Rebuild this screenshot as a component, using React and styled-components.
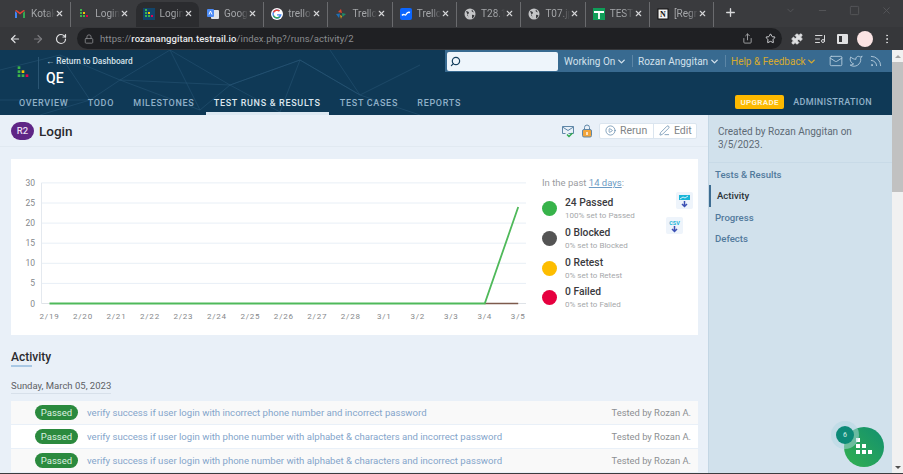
import React from "react";
import styled, { createGlobalStyle } from "styled-components";
import {
  ArrowLeft, ArrowRight, RotateCw, Lock, Share, Star, Puzzle, ListMusic, MoreVertical, Search,
  ChevronDown, Mail, Twitter, Rss, Plus, X, Minus, Square, CirclePlay, PenLine,
} from "lucide-react";

const GlobalStyle = createGlobalStyle`
  html, body { margin: 0; padding: 0; height: 100%; overflow: hidden; }
  body { font-family: Roboto, "Liberation Sans", sans-serif; background: #e9f0f8; }
  * { box-sizing: border-box; }
`;

const Screen = styled.div`
  width: 903px;
  height: 474px;
  display: flex;
  flex-direction: column;
  overflow: hidden;
  border-bottom: 1px solid #3b3c3f;
`;

/* browser chrome */
const TabStrip = styled.div`
  height: 27px;
  flex: none;
  background: #3a3b3e;
  display: flex;
  align-items: flex-start;
  padding: 2px 0 0 7px;
`;

const Tab = styled.div`
  width: 64.3px;
  height: 25px;
  flex: none;
  display: flex;
  align-items: center;
  padding: 0 6px 2px 7px;
  background: ${({ $active }) => ($active ? "#2b2c2f" : "transparent")};
  border-radius: ${({ $active }) => ($active ? "8px 8px 0 0" : "0")};
  border-right: 1px solid ${({ $sep }) => ($sep ? "#6a6b6e" : "transparent")};
  background-clip: padding-box;
`;

const TabIcon = styled.span`
  width: 12px;
  height: 12px;
  flex: none;
  display: flex;
  color: #c6c7c9;
`;

const TabTitle = styled.span`
  flex: 1;
  margin-left: 5px;
  font-size: 10px;
  color: #a4a6a9;
  overflow: hidden;
  white-space: nowrap;
  mask-image: linear-gradient(to right, #000 60%, transparent);
`;

const TabClose = styled(X)`
  width: 9px;
  height: 9px;
  flex: none;
  color: #d5d6d8;
  stroke-width: 3;
`;

const NewTab = styled(Plus)`
  width: 13px;
  height: 13px;
  margin: 4px 0 0 10px;
  color: #d8d9db;
  stroke-width: 2.5;
`;

const WindowControls = styled.div`
  margin-left: auto;
  display: flex;
  gap: 21px;
  align-items: center;
  padding: 3px 11px 0 0;
  color: #55565a;
  svg { width: 11px; height: 11px; }
`;

const AddressBar = styled.div`
  height: 23px;
  flex: none;
  background: #36373a;
  display: flex;
  align-items: center;
  padding: 0 10px 0 9px;
  color: #d8d9db;
`;

const NavIcon = styled.span`
  display: flex;
  margin-right: ${({ $gap }) => $gap || 11}px;
  color: ${({ $dim }) => ($dim ? "#7c7d80" : "#e0e1e3")};
  svg { width: 12px; height: 12px; stroke-width: 2.4; }
`;

const UrlPill = styled.div`
  width: 705px;
  height: 21px;
  border-radius: 11px;
  background: #1f2023;
  display: flex;
  align-items: center;
  padding: 0 6px 0 7px;
  font-size: 9.5px;
  letter-spacing: 0.07px;
  color: #8a8c8f;
  svg { width: 10px; height: 10px; flex: none; }
`;

const UrlText = styled.span`
  margin-left: 6px;
  flex: 1;
  b { color: #e8e9eb; font-weight: 500; }
`;

const PillActions = styled.div`
  display: flex;
  gap: 12px;
  color: #a5a6a8;
  svg { width: 11px; height: 11px; }
  svg:last-child { color: #dcdde0; }
`;

const Extensions = styled.div`
  margin-left: auto;
  display: flex;
  align-items: center;
  gap: 11px;
  svg { width: 12px; height: 12px; }
`;

const Avatar = styled.span`
  width: 16px;
  height: 16px;
  margin: 0 -3px 0 -2px;
  border-radius: 50%;
  background: #fbe4e4;
`;

const SidePanelIcon = styled.span`
  width: 11px;
  height: 10px;
  border: 2px solid #e0e1e3;
  border-left-width: 6px;
  background: #36373a;
  border-radius: 1px;
  transform: scaleX(-1);
`;

/* page */
const Window = styled.div`
  flex: 1;
  min-height: 0;
  display: flex;
`;

const Content = styled.div`
  width: 892px;
  flex: none;
  display: flex;
  flex-direction: column;
  position: relative;
`;

const Header = styled.header`
  height: 65px;
  flex: none;
  background: #0f3956;
  display: flex;
  flex-direction: column;
  position: relative;
  overflow: hidden;
`;

const HeaderLines = styled.svg`
  position: absolute;
  left: 0;
  top: 0;
  width: 460px;
  height: 65px;
  pointer-events: none;
`;

const HeaderTop = styled.div`
  height: 43px;
  flex: none;
  display: flex;
  justify-content: space-between;
  align-items: flex-start;
  position: relative;
`;

const Brand = styled.div`
  display: flex;
  align-items: center;
  padding: 7px 0 0 15px;
`;

const BrandText = styled.div`
  margin-left: 7px;
  padding-left: 7px;
  height: 32px;
  border-left: 1px solid #2a5573;
  display: flex;
  flex-direction: column;
`;

const BackLink = styled.div`
  font-size: 8.3px;
  font-weight: 500;
  color: #d5e1ea;
  line-height: 10px;
  margin-top: -1px;
`;

const Project = styled.div`
  font-size: 14px;
  font-weight: 500;
  color: #fff;
  line-height: 16px;
  margin-top: 4px;
`;

const TopBand = styled.div`
  width: 447px;
  height: 22px;
  background: #386a90;
  display: flex;
  align-items: center;
  padding: 0 0 0 2px;
`;

const SearchBox = styled.div`
  width: 111px;
  height: 19px;
  background: #eef5fb;
  border-radius: 2px;
  display: flex;
  align-items: center;
  padding-left: 3px;
  color: #17405e;
  margin-right: 6px;
  svg { width: 11px; height: 11px; stroke-width: 2.6; transform: scaleX(-1); }
`;

const BandMenu = styled.div`
  display: flex;
  align-items: center;
  flex: none;
  width: ${({ $w }) => $w}px;
  height: 12px;
  font-size: 10px;
  white-space: nowrap;
  color: ${({ $help }) => ($help ? "#d7aa2f" : "#d3e1ec")};
  svg { width: 11px; height: 11px; stroke-width: 3; flex: none; margin-left: auto; margin-right: 5px; }
  & + & { border-left: 1px solid #5c86a6; padding-left: 5px; }
`;

const BandIcons = styled.div`
  display: flex;
  gap: 6px;
  margin-left: 10px;
  color: #b9cfdf;
  svg { width: 14px; height: 14px; stroke-width: 1.5; }
`;

const NavRow = styled.nav`
  flex: 1;
  display: flex;
  align-items: stretch;
  padding: 0 20px 0 11px;
  position: relative;
`;

const NavItem = styled.div`
  padding: 1px 8px 0;
  margin-right: 3.3px;
  display: flex;
  align-items: center;
  white-space: nowrap;
  font-size: 9px;
  font-weight: 500;
  letter-spacing: 0.68px;
  color: ${({ $active }) => ($active ? "#dbe6ee" : "#8fb0c8")};
  border-bottom: 3px solid ${({ $active }) => ($active ? "#dce8f2" : "transparent")};
`;

const Upgrade = styled.div`
  align-self: flex-start;
  margin: 2px 9px 0 auto;
  width: 49px;
  height: 14px;
  background: #fdb900;
  border-radius: 2px;
  color: #fff3cf;
  font-size: 8px;
  font-weight: 700;
  letter-spacing: 0.3px;
  display: flex;
  align-items: center;
  justify-content: center;
`;

const Admin = styled.div`
  align-self: flex-start;
  margin-top: 2px;
  line-height: 14px;
  font-size: 9px;
  font-weight: 500;
  letter-spacing: 0.36px;
  color: #8fb0c8;
`;

const Body = styled.div`
  flex: 1;
  min-height: 0;
  display: flex;
`;

const Main = styled.main`
  width: 708px;
  flex: none;
  display: flex;
  flex-direction: column;
  padding: 0 10px 0 11px;
  overflow: hidden;
`;

const TitleRow = styled.div`
  height: 32px;
  flex: none;
  margin: 0 -10px 0 -11px;
  padding: 0 11px 0 11px;
  border-bottom: 1px solid #e1e9f1;
  display: flex;
  align-items: center;
`;

const RunBadge = styled.span`
  width: 23px;
  height: 18px;
  border-radius: 9px;
  background: #5f2586;
  color: #e9dcf0;
  font-size: 9.5px;
  font-weight: 500;
  display: flex;
  align-items: center;
  justify-content: center;
`;

const Title = styled.h1`
  margin: 0 0 0 5px;
  font-size: 13.5px;
  font-weight: 500;
  color: #2a2a2e;
  flex: 1;
`;

const TitleIcon = styled.svg`
  width: 14px;
  height: 14px;
  margin-right: 5px;
  flex: none;
`;

const ButtonGroup = styled.div`
  display: flex;
  height: 16px;
  background: #fff;
  border: 1px solid #dbe5ef;
  border-radius: 2px;
`;

const ActionButton = styled.div`
  display: flex;
  align-items: center;
  gap: 4px;
  padding: 0 4px 0 5px;
  width: ${({ $w }) => $w}px;
  font-size: 10.5px;
  color: #808487;
  & + & { border-left: 1px solid #dbe5ef; }
  svg { width: 11px; height: 11px; color: #5f87a8; stroke-width: 1.6; flex: none; }
`;

const Card = styled.section`
  height: 176px;
  flex: none;
  margin-top: 12px;
  background: #fff;
  display: flex;
  position: relative;
`;

const ChartSvg = styled.svg`
  width: 517px;
  height: 176px;
  flex: none;
`;

const Legend = styled.div`
  padding: 18px 0 0 14px;
  flex: 1;
`;

const LegendHead = styled.div`
  font-size: 9.5px;
  color: #9a9c9f;
  line-height: 11px;
  margin-bottom: 6px;
  a { color: #6d9bc4; text-decoration: underline; }
`;

const LegendRow = styled.div`
  height: 29.7px;
  display: flex;
  align-items: center;
  gap: 8px;
`;

const Dot = styled.span`
  width: 15px;
  height: 15px;
  border-radius: 50%;
  background: ${({ $c }) => $c};
  flex: none;
`;

const LegendLabel = styled.div`
  font-size: 10.3px;
  font-weight: 500;
  color: #3a3a3e;
  line-height: 13px;
`;

const LegendSub = styled.div`
  font-size: 8px;
  color: #a5a7aa;
  line-height: 11px;
  margin-top: 1px;
`;

const ExportIcon = styled.div`
  position: absolute;
  left: ${({ $x }) => $x}px;
  top: ${({ $y }) => $y}px;
  width: 17px;
  height: 17px;
  border-radius: 2px;
  background: #eef4fb;
  display: flex;
`;

const SectionTitle = styled.h2`
  margin: 15px 0 0;
  font-size: 12px;
  font-weight: 500;
  color: #2a2a2e;
  line-height: 14px;
  padding-bottom: 3px;
  position: relative;
  &::after {
    content: "";
    position: absolute;
    left: 0;
    bottom: 0;
    width: 21px;
    height: 2px;
    background: #a9c8e4;
  }
`;

const DateLine = styled.div`
  margin-top: 13px;
  align-self: flex-start;
  font-size: 9.5px;
  color: #5d6165;
  line-height: 12px;
  border-bottom: 1px solid #d7e0ea;
  padding-bottom: 1px;
`;

const ResultList = styled.div`
  margin-top: 7px;
  display: flex;
  flex-direction: column;
  gap: 1px;
`;

const ResultRow = styled.div`
  height: 23px;
  flex: none;
  display: flex;
  align-items: center;
  padding: 0 7px 0 24px;
  background: ${({ $odd }) => ($odd ? "#f9f9f9" : "#fff")};
`;

const StatusPill = styled.span`
  width: 43px;
  height: 15px;
  border-radius: 8px;
  background: #2b8a3e;
  color: #dff0e2;
  font-size: 9.5px;
  display: flex;
  align-items: center;
  justify-content: center;
  flex: none;
`;

const TestLink = styled.span`
  margin-left: 9px;
  flex: 1;
  font-size: 9.58px;
  color: #84a5cb;
  white-space: nowrap;
`;

const TestedBy = styled.span`
  font-size: 9.4px;
  color: #8c8f92;
`;

const Sidebar = styled.aside`
  width: 184px;
  flex: none;
  background: #d1e1ec;
  border-left: 1px solid #c3d6e4;
  display: flex;
  flex-direction: column;
`;

const SideInfo = styled.div`
  height: 48px;
  flex: none;
  padding: 10px 20px 0 9px;
  border-bottom: 1px solid #c8dae7;
  font-size: 10px;
  line-height: 13px;
  color: #5d6a75;
`;

const SideLinks = styled.div`
  padding-top: 1px;
  display: flex;
  flex-direction: column;
`;

const SideLink = styled.div`
  height: 21.3px;
  display: flex;
  align-items: center;
  padding-left: ${({ $active }) => ($active ? 6 : 4)}px;
  font-size: 9.6px;
  font-weight: 500;
  color: ${({ $active }) => ($active ? "#2c3338" : "#517a9c")};
  border-left: 2px solid ${({ $active }) => ($active ? "#3e6d92" : "transparent")};
`;

const Fab = styled.div`
  position: absolute;
  left: 844px;
  top: 377px;
  width: 40px;
  height: 40px;
  border-radius: 50%;
  background: linear-gradient(225deg, #12906f, #34b04f);
  display: flex;
  align-items: center;
  justify-content: center;
`;

const FabBadge = styled.div`
  position: absolute;
  left: 836px;
  top: 376px;
  width: 18px;
  height: 18px;
  z-index: 1;
  border-radius: 50%;
  background: #0d8a78;
  box-shadow: 0 0 0 5px rgba(180, 215, 225, 0.5);
  color: #bfe4dc;
  font-size: 7px;
  font-weight: 500;
  display: flex;
  align-items: center;
  justify-content: center;
`;

const ScrollTrack = styled.div`
  width: 11px;
  flex: none;
  background: #f1f1f1;
  display: flex;
  flex-direction: column;
`;

const ScrollArrow = styled.div`
  height: 12px;
  flex: none;
  display: flex;
  align-items: center;
  justify-content: center;
  &::after {
    content: "";
    border-left: 3px solid transparent;
    border-right: 3px solid transparent;
    ${({ $down }) => ($down ? "border-top: 3px solid #505050;" : "border-bottom: 3px solid #a3a3a3;")}
  }
`;

const ScrollThumb = styled.div`
  height: 130px;
  flex: none;
  background: #c1c1c1;
  margin-bottom: auto;
`;

const GmailIcon = () => (
  <svg viewBox="0 0 12 12" width="12" height="12">
    <path d="M1 3v7h2V5z" fill="#4285f4" />
    <path d="M9 5v5h2V3z" fill="#34a853" />
    <path d="M1 2.5 6 6.5l5-4L9.5 2 6 4.6 2.5 2z" fill="#ea4335" />
  </svg>
);

const RailIcon = ({ bg, size = 12 }) => (
  <svg viewBox="0 0 12 12" width={size} height={size}>
    {bg && <rect width="12" height="12" fill="#12456b" />}
    <rect x="2" y="1" width="2" height="2" fill="#3db54a" />
    <rect x="2" y="4" width="2" height="2" fill="#3db54a" />
    <rect x="5" y="4" width="2" height="2" fill="#f6c500" />
    <rect x="2" y="7" width="2" height="2" fill="#3db54a" />
    <rect x="5" y="7" width="2" height="2" fill="#3db54a" />
    <rect x="8" y="7" width="2" height="2" fill="#e6004c" />
  </svg>
);

const TranslateIcon = () => (
  <svg viewBox="0 0 12 12" width="12" height="12">
    <rect x="4" y="2" width="8" height="9" rx="1" fill="#dfe3e8" />
    <rect x="0" y="1" width="7" height="8" rx="1" fill="#4c8bf5" />
    <path d="M2 6.5 3.5 3 5 6.5" stroke="#fff" fill="none" />
  </svg>
);

const GoogleIcon = () => (
  <svg viewBox="0 0 12 12" width="12" height="12">
    <circle cx="6" cy="6" r="6" fill="#fff" />
    <path d="M10 6.2H6.1v1.3h2.3C8 8.6 7.1 9.2 6 9.2a3.2 3.2 0 0 1 0-6.4c.8 0 1.5.3 2 .8l1-1A4.6 4.6 0 1 0 10.6 6z" fill="#4285f4" />
    <path d="M1.9 3.9 3.1 4.8A3.2 3.2 0 0 1 8 3.6l1-1A4.6 4.6 0 0 0 1.9 3.900z" fill="#ea4335" />
    <path d="M1.9 8.1 3.1 7.2A3.2 3.2 0 0 0 8 8.4l1 1A4.6 4.6 0 0 1 1.9 8.100z" fill="#34a853" />
  </svg>
);

const TrelloStar = () => (
  <svg viewBox="0 0 12 12" width="12" height="12">
    <path d="M6 1 7 5 3 4z" fill="#d8452e" />
    <path d="M1 6 5 5.5 4 10z" fill="#1f6fb5" />
    <path d="M7 5 11 6 7.5 9z" fill="#1d8c6a" />
    <path d="M5 7 7 8 6 11z" fill="#e0a21b" />
  </svg>
);

const WaveIcon = () => (
  <svg viewBox="0 0 12 12" width="12" height="12">
    <rect width="12" height="12" rx="2" fill="#0b66ff" />
    <path d="M2 7.5c2-3 3 1 4-1s2-3 4-2" stroke="#fff" strokeWidth="1.4" fill="none" />
  </svg>
);

const SheetIcon = () => (
  <svg viewBox="0 0 12 12" width="12" height="12">
    <rect width="12" height="12" fill="#0f9d58" />
    <path d="M1 4h10M6 4v7" stroke="#fff" strokeWidth="1.8" />
  </svg>
);

const NotionIcon = () => (
  <svg viewBox="0 0 12 12" width="12" height="12">
    <rect x="1" y="1" width="10" height="10" fill="#f5f5f5" stroke="#111" />
    <text x="6" y="9" textAnchor="middle" fontSize="8" fontWeight="700" fill="#111" fontFamily="'Liberation Serif', serif">N</text>
  </svg>
);

const WebIcon = () => (
  <svg viewBox="0 0 12 12" width="12" height="12">
    <circle cx="6" cy="6" r="5.5" fill="#c4c5c7" />
    <path d="M2 3c2 0 3 1 3 2S3 6 3 7s2 1 2 3M8 1.5C7 3 8 4 10 4.5M8 7c1-.5 2 0 2.5.5C10 9 9 10 8 10.5z" fill="#3a3b3e" />
  </svg>
);

const tabs = [
  { title: "Kotak", icon: <GmailIcon />, sep: true },
  { title: "Login", icon: <RailIcon /> },
  { title: "Login", icon: <RailIcon bg />, active: true },
  { title: "Goog", icon: <TranslateIcon />, sep: true },
  { title: "trello", icon: <GoogleIcon />, sep: true },
  { title: "Trello", icon: <TrelloStar />, sep: true },
  { title: "Trello", icon: <WaveIcon />, sep: true },
  { title: "T28.1", icon: <WebIcon />, sep: true },
  { title: "T07.jp", icon: <WebIcon />, sep: true },
  { title: "TESTI", icon: <SheetIcon />, sep: true },
  { title: "[Regr", icon: <NotionIcon />, sep: true },
];

const navItems = ["OVERVIEW", "TODO", "MILESTONES", "TEST RUNS & RESULTS", "TEST CASES", "REPORTS"];

const legend = [
  { label: "24 Passed", sub: "100% set to Passed", color: "#37b34a" },
  { label: "0 Blocked", sub: "0% set to Blocked", color: "#545454" },
  { label: "0 Retest", sub: "0% set to Retest", color: "#fdbd00" },
  { label: "0 Failed", sub: "0% set to Failed", color: "#e6003f" },
];

const results = [
  "verify success if user login with incorrect phone number and incorrect password",
  "verify success if user login with phone number with alphabet & characters and incorrect password",
  "verify success if user login with phone number with alphabet & characters and incorrect password",
];

const dates = ["2/19", "2/20", "2/21", "2/22", "2/23", "2/24", "2/25", "2/26", "2/27", "2/28", "3/1", "3/2", "3/3", "3/4", "3/5"];

function Chart() {
  const ticks = [30, 25, 20, 15, 10, 5, 0];
  const y = (v) => 144.5 - v * 4.02;
  const x = (i) => 38.5 + i * 33.48;
  return (
    <ChartSvg viewBox="0 0 517 176">
      {ticks.map((t) => (
        <g key={t}>
          <line x1="30.5" x2="515" y1={y(t)} y2={y(t)} stroke={t === 0 ? "#dfe3e8" : "#e8eff6"} strokeWidth="1" />
          <text x="24" y={y(t) + 3} textAnchor="end" fontSize="8.5" fill="#85888b" fontFamily="Roboto, sans-serif">{t}</text>
        </g>
      ))}
      <line x1="30.5" x2="30.5" y1={y(30)} y2={y(0)} stroke="#e4e9ef" />
      {dates.map((d, i) => (
        <text key={d} x={x(i)} y="159.5" textAnchor="middle" fontSize="8" letterSpacing="0.8" fill="#85888b" fontFamily="Roboto, sans-serif">{d}</text>
      ))}
      <line x1={x(13)} x2={x(14)} y1={y(0)} y2={y(0)} stroke="#7d5a4c" strokeWidth="1.5" />
      <polyline points={`${x(0)},${y(0)} ${x(13)},${y(0)} ${x(14)},${y(24)}`} fill="none" stroke="#4fb95a" strokeWidth="1.8" />
    </ChartSvg>
  );
}

function HeaderTexture() {
  return (
    <HeaderLines viewBox="0 0 460 65">
      <path
        d="M0 20 60 5 120 30 170 0 230 35 300 10 360 45 420 15M60 5 90 50 120 30 200 60 230 35 280 62 300 10M170 0 200 60M360 45 300 10M0 50 90 50M360 45 420 65M120 30 230 35M230 35 300 10M330 0 360 45M90 50 40 65"
        fill="none"
        stroke="#2a5878"
        strokeWidth="0.5"
      />
    </HeaderLines>
  );
}

function App() {
  return (
    <Screen>
      <GlobalStyle />
      <TabStrip>
        {tabs.map((t, i) => (
          <Tab key={i} $active={t.active} $sep={t.sep}>
            <TabIcon>{t.icon}</TabIcon>
            <TabTitle>{t.title}</TabTitle>
            <TabClose />
          </Tab>
        ))}
        <NewTab />
        <WindowControls>
          <ChevronDown />
          <Minus />
          <Square />
          <X />
        </WindowControls>
      </TabStrip>
      <AddressBar>
        <NavIcon><ArrowLeft /></NavIcon>
        <NavIcon $dim><ArrowRight /></NavIcon>
        <NavIcon $gap={10}><RotateCw /></NavIcon>
        <UrlPill>
          <Lock />
          <UrlText>https://<b>rozananggitan.testrail.io</b>/index.php?/runs/activity/2</UrlText>
          <PillActions>
            <Share />
            <Star />
          </PillActions>
        </UrlPill>
        <Extensions>
          <Puzzle fill="#e0e1e3" />
          <ListMusic />
          <SidePanelIcon />
          <Avatar />
          <MoreVertical />
        </Extensions>
      </AddressBar>
      <Window>
        <Content>
          <Header>
            <HeaderTexture />
            <HeaderTop>
              <Brand>
                <RailIcon size={16} />
                <BrandText>
                  <BackLink>← Return to Dashboard</BackLink>
                  <Project>QE</Project>
                </BrandText>
              </Brand>
              <TopBand>
                <SearchBox><Search /></SearchBox>
                <BandMenu $w={68}>Working On<ChevronDown /></BandMenu>
                <BandMenu $w={93}>Rozan Anggitan<ChevronDown /></BandMenu>
                <BandMenu $help $w={94}>Help &amp; Feedback<ChevronDown /></BandMenu>
                <BandIcons><Mail /><Twitter /><Rss /></BandIcons>
              </TopBand>
            </HeaderTop>
            <NavRow>
              {navItems.map((n, i) => (
                <NavItem key={n} $active={i === 3}>{n}</NavItem>
              ))}
              <Upgrade>UPGRADE</Upgrade>
              <Admin>ADMINISTRATION</Admin>
            </NavRow>
          </Header>
          <Body>
            <Main>
              <TitleRow>
                <RunBadge>R2</RunBadge>
                <Title>Login</Title>
                <TitleIcon viewBox="0 0 14 14">
                  <path d="M1.5 2.5h11v7H7.5M1.5 2.5v7h3M1.5 3l5.5 3.5L12.5 3" fill="none" stroke="#5f87a8" strokeWidth="1" />
                  <path d="M6 10.5l2 2 3.5-3.5" fill="none" stroke="#2fa84f" strokeWidth="1.4" />
                </TitleIcon>
                <TitleIcon viewBox="0 0 14 14">
                  <rect x="2.5" y="5.5" width="9" height="7.5" rx="1.5" fill="#f3a53a" stroke="#5f87a8" />
                  <path d="M4.5 5.5V3.500a2.500 2.500 0 0 1 5 0v2" fill="none" stroke="#5f87a8" />
                  <rect x="6.3" y="8" width="1.4" height="3" fill="#fff" />
                </TitleIcon>
                <ButtonGroup>
                  <ActionButton $w={53}><CirclePlay />Rerun</ActionButton>
                  <ActionButton $w={43}><PenLine />Edit</ActionButton>
                </ButtonGroup>
              </TitleRow>
              <Card>
                <Chart />
                <Legend>
                  <LegendHead>In the past <a>14 days</a>:</LegendHead>
                  {legend.map((l) => (
                    <LegendRow key={l.label}>
                      <Dot $c={l.color} />
                      <div>
                        <LegendLabel>{l.label}</LegendLabel>
                        <LegendSub>{l.sub}</LegendSub>
                      </div>
                    </LegendRow>
                  ))}
                </Legend>
                <ExportIcon $x={665} $y={33}>
                  <svg viewBox="0 0 17 17" width="17" height="17">
                    <rect x="3" y="3" width="11" height="5" fill="#19b5d8" />
                    <path d="M4 7l3-2 2 1 3-2" stroke="#fff" fill="none" strokeWidth="0.8" />
                    <path d="M8.5 9v5M6 12l2.5 2.5L11 12" stroke="#3c50b4" strokeWidth="1.5" fill="none" />
                  </svg>
                </ExportIcon>
                <ExportIcon $x={655} $y={58}>
                  <svg viewBox="0 0 17 17" width="17" height="17">
                    <text x="8.5" y="7.5" textAnchor="middle" fontSize="5.5" fontWeight="700" fill="#19b5d8" fontFamily="Roboto, sans-serif">CSV</text>
                    <path d="M8.5 9v5M6 12l2.5 2.5L11 12" stroke="#3c50b4" strokeWidth="1.5" fill="none" />
                  </svg>
                </ExportIcon>
              </Card>
              <SectionTitle>Activity</SectionTitle>
              <DateLine>Sunday, March 05, 2023</DateLine>
              <ResultList>
                {results.map((r, i) => (
                  <ResultRow key={i} $odd={i % 2 === 0}>
                    <StatusPill>Passed</StatusPill>
                    <TestLink>{r}</TestLink>
                    <TestedBy>Tested by Rozan A.</TestedBy>
                  </ResultRow>
                ))}
              </ResultList>
            </Main>
            <Sidebar>
              <SideInfo>Created by Rozan Anggitan on 3/5/2023.</SideInfo>
              <SideLinks>
                <SideLink>Tests &amp; Results</SideLink>
                <SideLink $active>Activity</SideLink>
                <SideLink>Progress</SideLink>
                <SideLink>Defects</SideLink>
              </SideLinks>
            </Sidebar>
          </Body>
          <FabBadge>6</FabBadge>
          <Fab>
            <svg viewBox="0 0 20 20" width="20" height="20">
              <rect x="2" y="1" width="4" height="4" fill="#fff" />
              <rect x="2" y="7" width="4" height="4" fill="#fff" />
              <rect x="8" y="7" width="4" height="4" fill="#fff" />
              <rect x="2" y="13" width="4" height="4" fill="#fff" />
              <rect x="8" y="13" width="4" height="4" fill="#fff" />
              <rect x="14" y="13" width="4" height="4" fill="#fff" />
            </svg>
          </Fab>
        </Content>
        <ScrollTrack>
          <ScrollArrow />
          <ScrollThumb />
          <ScrollArrow $down />
        </ScrollTrack>
      </Window>
    </Screen>
  );
}

export default App;
